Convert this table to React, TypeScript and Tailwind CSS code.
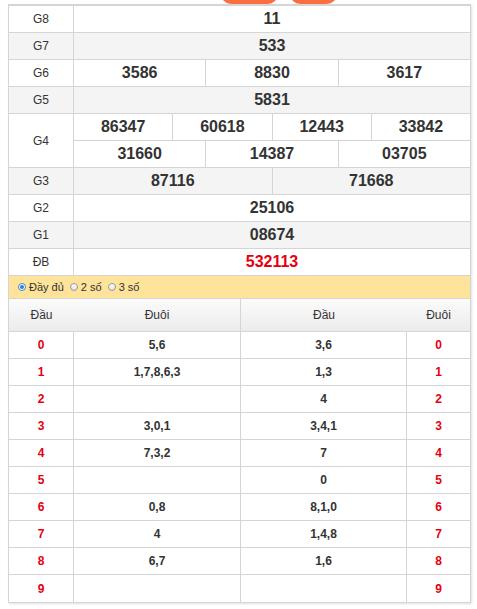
const prizes: { label: string; rows: string[][]; red?: boolean }[] = [
  { label: "G8", rows: [["11"]] },
  { label: "G7", rows: [["533"]] },
  { label: "G6", rows: [["3586", "8830", "3617"]] },
  { label: "G5", rows: [["5831"]] },
  {
    label: "G4",
    rows: [
      ["86347", "60618", "12443", "33842"],
      ["31660", "14387", "03705"],
    ],
  },
  { label: "G3", rows: [["87116", "71668"]] },
  { label: "G2", rows: [["25106"]] },
  { label: "G1", rows: [["08674"]] },
  { label: "ĐB", rows: [["532113"]], red: true },
];

const loto: { head: string; tail: string }[] = [
  { head: "5,6", tail: "3,6" },
  { head: "1,7,8,6,3", tail: "1,3" },
  { head: "", tail: "4" },
  { head: "3,0,1", tail: "3,4,1" },
  { head: "7,3,2", tail: "7" },
  { head: "", tail: "0" },
  { head: "0,8", tail: "8,1,0" },
  { head: "4", tail: "1,4,8" },
  { head: "6,7", tail: "1,6" },
  { head: "", tail: "" },
];

function Radio({ checked, label }: { checked?: boolean; label: string }) {
  return (
    <label className="flex items-center gap-[3px]">
      <span
        className={
          checked
            ? "flex h-[8px] w-[8px] items-center justify-center rounded-full border border-[#3b82d8] bg-white"
            : "h-[8px] w-[8px] rounded-full border border-[#9a9a9a] bg-gradient-to-b from-white to-[#e2e2e2]"
        }
      >
        {checked && <span className="h-[4px] w-[4px] rounded-full bg-[#2f7fd6]" />}
      </span>
      <span>{label}</span>
    </label>
  );
}

export default function App() {
  return (
    <div
      className="min-h-screen bg-white text-[#333]"
      style={{ fontFamily: '"Liberation Sans", Arial, sans-serif' }}
    >
      <div className="flex h-[4px] gap-[10px] overflow-hidden pl-[220px]">
        <div className="-mt-[20px] h-[24px] w-[59px] rounded-full bg-[#fb6e3f]" />
        <div className="-mt-[20px] h-[24px] w-[49px] rounded-full bg-[#fb6e3f]" />
      </div>

      <div className="ml-2 w-[463px] border border-t-2 border-[#d5d5d5] shadow-[1px_1px_2px_rgba(0,0,0,0.12)]">
        {prizes.map((p, i) => (
          <div
            key={p.label}
            className={`flex border-b border-[#d5d5d5] ${i % 2 === 1 ? "bg-[#f4f4f4]" : "bg-white"}`}
          >
            <div className="flex w-[65px] shrink-0 items-center justify-center border-r border-[#d5d5d5] text-[12px]">
              {p.label}
            </div>
            <div className="flex flex-1 flex-col">
              {p.rows.map((row, r) => (
                <div
                  key={r}
                  className={`flex h-[26px] ${r > 0 ? "box-content border-t border-[#d5d5d5]" : ""}`}
                >
                  {row.map((n, c) => (
                    <div
                      key={c}
                      className={`flex flex-1 items-center justify-center text-[16px] font-bold ${
                        c > 0 ? "border-l border-[#d5d5d5]" : ""
                      } ${p.red ? "text-[#e4000f]" : "text-[#333]"}`}
                    >
                      {n}
                    </div>
                  ))}
                </div>
              ))}
            </div>
          </div>
        ))}

        <div className="flex h-[23px] items-center gap-[6px] border-b border-[#d5d5d5] bg-[#fee39a] pl-[9px] text-[11px] text-[#333]">
          <Radio checked label="Đầy đủ" />
          <Radio label="2 số" />
          <Radio label="3 số" />
        </div>

        <div className="grid h-[33px] grid-cols-[232px_1fr] border-b border-[#d5d5d5] bg-gradient-to-b from-[#fbfbfb] to-[#ebebeb] text-[12px]">
          <div className="grid grid-cols-[65px_1fr] items-center border-r border-[#d5d5d5] text-center">
            <span>Đầu</span>
            <span>Đuôi</span>
          </div>
          <div className="grid grid-cols-[166px_1fr] items-center text-center">
            <span>Đầu</span>
            <span>Đuôi</span>
          </div>
        </div>

        {loto.map((row, i) => (
          <div
            key={i}
            className={`grid h-[27px] grid-cols-[65px_167px_166px_1fr] text-[12px] font-bold ${
              i < loto.length - 1 ? "border-b border-[#d5d5d5]" : "h-[26px]"
            }`}
          >
            <div className="flex items-center justify-center border-r border-[#d5d5d5] text-[#e4000f]">
              {i}
            </div>
            <div className="flex items-center justify-center border-r border-[#d5d5d5]">{row.head}</div>
            <div className="flex items-center justify-center border-r border-[#d5d5d5]">{row.tail}</div>
            <div className="flex items-center justify-center text-[#e4000f]">{i}</div>
          </div>
        ))}
      </div>
    </div>
  );
}
